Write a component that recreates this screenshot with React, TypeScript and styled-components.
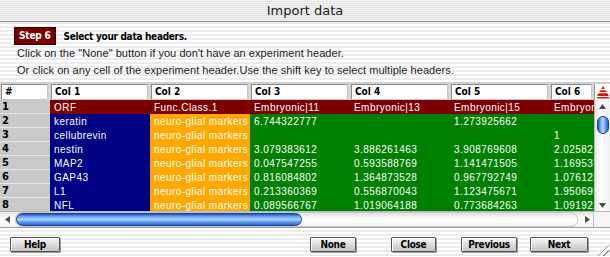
import React from 'react';
import styled, { createGlobalStyle } from 'styled-components';

const GlobalStyle = createGlobalStyle`
  html, body {
    margin: 0;
    padding: 0;
    background: #ffffff;
  }
`;

const uiFont = `"Liberation Sans", Arial, sans-serif`;
const boldFont = `"DejaVu Sans", "Liberation Sans", sans-serif`;

const pinstripe = `repeating-linear-gradient(to bottom, #ffffff 0px, #ffffff 2px, #ececec 2px, #ececec 4px)`;

const Window = styled.div`
  width: 610px;
  height: 257px;
  display: flex;
  flex-direction: column;
  background: ${pinstripe};
  overflow: hidden;
  position: relative;
  font-family: ${uiFont};
`;

const TitleBar = styled.div`
  height: 21px;
  border-bottom: 1px solid #8c8c8c;
  display: flex;
  align-items: center;
  justify-content: center;
  font-family: ${boldFont};
  font-size: 13px;
  color: #1a1a1a;
  background: repeating-linear-gradient(to bottom, #f4f4f4 0px, #f4f4f4 1px, #e2e2e2 1px, #e2e2e2 2px);
`;

const Instructions = styled.div`
  padding: 5px 0 0 14px;
  height: 52px;
`;

const StepRow = styled.div`
  display: flex;
  align-items: center;
  gap: 8px;
  height: 18px;
`;

const StepBadge = styled.div`
  background: #7a0000;
  border: 1px solid #2a0000;
  color: #ffffff;
  font-family: ${boldFont};
  font-weight: bold;
  font-size: 10px;
  font-stretch: condensed;
  padding: 0 4px;
  height: 16px;
  line-height: 16px;
  letter-spacing: -0.2px;
`;

const StepTitle = styled.div`
  font-family: ${boldFont};
  font-weight: bold;
  font-size: 10px;
  font-stretch: condensed;
  letter-spacing: -0.3px;
  color: #000;
`;

const Hint = styled.div`
  font-size: 11px;
  height: 17px;
  line-height: 17px;
  padding-left: 3px;
  color: #1a1a1a;
  letter-spacing: 0.05px;
`;

const TableFrame = styled.div`
  margin-top: 3px;
  border-top: 2px solid #cfcfcf;
  display: flex;
  flex-direction: column;
`;

const columns = `50px repeat(5, 100px) 44px`;

const HeaderRow = styled.div`
  display: grid;
  grid-template-columns: ${columns} 16px;
  height: 16px;
  background: #d4d4d4;
`;

const HeaderCell = styled.div`
  margin: 0 2px 0 1px;
  background: #ffffff;
  border: 1px solid #8a8a8a;
  border-right-color: #c8c8c8;
  border-bottom-color: #c8c8c8;
  font-family: ${boldFont};
  font-weight: bold;
  font-size: 10px;
  font-stretch: condensed;
  line-height: 14px;
  padding-left: 3px;
  white-space: nowrap;
  overflow: hidden;
`;

const SortCell = styled.div`
  background: #ffffff;
  border-left: 1px solid #9a9a9a;
  display: flex;
  align-items: center;
  justify-content: center;
`;

const Body = styled.div`
  display: flex;
  height: 111px;
`;

const Grid = styled.div`
  width: 594px;
  overflow: hidden;
  display: grid;
  grid-template-columns: ${columns};
  grid-auto-rows: 14px;
  align-content: start;
`;

const RowNum = styled.div`
  background: #c9c9c9;
  border-bottom: 1px solid #e6e6e6;
  box-sizing: border-box;
  font-family: ${boldFont};
  font-weight: bold;
  font-size: 10px;
  line-height: 14px;
  padding-left: 2px;
  color: #000;
`;

const Cell = styled.div<{ $bg: string }>`
  background: ${p => p.$bg};
  color: #ffffff;
  font-size: 10px;
  line-height: 15px;
  padding-left: 4px;
  white-space: nowrap;
  overflow: hidden;
  letter-spacing: 0.45px;
`;

const VScroll = styled.div`
  width: 16px;
  background: linear-gradient(to right, #e8e8e8, #ffffff 40%, #f0f0f0);
  border-left: 1px solid #b8b8b8;
  box-sizing: border-box;
  display: flex;
  flex-direction: column;
  align-items: center;
`;

const ArrowBox = styled.div<{ $w: number; $h: number }>`
  width: ${p => p.$w}px;
  height: ${p => p.$h}px;
  flex: none;
  display: flex;
  align-items: center;
  justify-content: center;
`;

const VTrack = styled.div`
  flex: 1;
  width: 100%;
  display: flex;
  flex-direction: column;
  align-items: center;
  padding-top: 4px;
`;

const aqua = `linear-gradient(to bottom, #1b56c8 0%, #6ea6f5 25%, #a9d0ff 50%, #5b97ec 75%, #2a66d8 100%)`;

const VThumb = styled.div`
  width: 12px;
  height: 18px;
  border-radius: 6px;
  background: linear-gradient(to right, #1d55c4 0%, #6fa6f4 25%, #b8dbff 50%, #5d98ea 75%, #2460d2 100%);
  border: 1px solid #1a3f8c;
  box-sizing: border-box;
`;

const HScrollRow = styled.div`
  display: flex;
  height: 15px;
  border-top: 1px solid #b8b8b8;
`;

const HScroll = styled.div`
  width: 594px;
  display: flex;
  align-items: center;
  background: linear-gradient(to bottom, #e4e4e4, #ffffff 45%, #efefef);
`;

const HTrack = styled.div`
  flex: 1;
  height: 13px;
  display: flex;
  align-items: center;
  border-radius: 7px;
  border: 1px solid #c8c8c8;
  margin-right: 3px;
  background: linear-gradient(to bottom, #e0e0e0, #ffffff 50%, #f2f2f2);
`;

const HThumb = styled.div`
  width: 286px;
  height: 13px;
  border-radius: 7px;
  box-sizing: border-box;
  border: 1px solid #1a3f8c;
  background: ${aqua};
`;

const Corner = styled.div`
  width: 16px;
  border-left: 1px solid #b8b8b8;
  background: #f4f4f4;
`;

const Footer = styled.div`
  flex: 1;
  border-top: 1px solid #a0a0a0;
  display: flex;
  align-items: flex-start;
  padding: 9px 0 0 10px;
  position: relative;
`;

const Button = styled.div<{ $w: number }>`
  width: ${p => p.$w}px;
  height: 15px;
  box-sizing: border-box;
  border: 1px solid #555;
  border-radius: 1px;
  background: linear-gradient(to bottom, #fafafa 0%, #dcdcdc 50%, #c4c4c4 100%);
  box-shadow: inset 1px 1px 0 #ffffff, 1px 1px 0 #9a9a9a;
  display: flex;
  align-items: center;
  justify-content: center;
  font-family: ${boldFont};
  font-weight: bold;
  font-size: 10px;
  font-stretch: condensed;
  letter-spacing: -0.3px;
  color: #000;
`;

const Spacer = styled.div<{ $w: number }>`
  width: ${p => p.$w}px;
  flex: none;
`;

const Grip = styled.div`
  position: absolute;
  right: 1px;
  bottom: 1px;
  width: 13px;
  height: 13px;
  background: repeating-linear-gradient(135deg, transparent 0px, transparent 2px, #8a8a8a 2px, #8a8a8a 3px, #ffffff 3px, #ffffff 4px);
  clip-path: polygon(100% 0, 100% 100%, 0 100%);
`;

const RED = '#7d0000';
const BLUE = '#000082';
const ORANGE = '#ffa800';
const GREEN = '#008000';

const rows: string[][] = [
  ['ORF', 'Func.Class.1', 'Embryonic|11', 'Embryonic|13', 'Embryonic|15', 'Embryonic|17'],
  ['keratin', 'neuro-glial markers', '6.744322777', '', '1.273925662', ''],
  ['cellubrevin', 'neuro-glial markers', '', '', '', '1'],
  ['nestin', 'neuro-glial markers', '3.079383612', '3.886261463', '3.908769608', '2.025821547'],
  ['MAP2', 'neuro-glial markers', '0.047547255', '0.593588769', '1.141471505', '1.169537212'],
  ['GAP43', 'neuro-glial markers', '0.816084802', '1.364873528', '0.967792749', '1.076125339'],
  ['L1', 'neuro-glial markers', '0.213360369', '0.556870043', '1.123475671', '1.950695212'],
  ['NFL', 'neuro-glial markers', '0.089566767', '1.019064188', '0.773684263', '1.091922874'],
];

function cellColor(row: number, col: number) {
  if (row === 0) return RED;
  if (col === 0) return BLUE;
  if (col === 1) return ORANGE;
  return GREEN;
}

function SortIcon() {
  return (
    <svg width="14" height="14" viewBox="0 0 14 14">
      <polygon points="7,1 13,11 1,11" fill="#e01010" />
      <rect x="0" y="4" width="14" height="1.2" fill="#ffffff" />
      <rect x="0" y="7" width="14" height="1.2" fill="#ffffff" />
      <rect x="1" y="12" width="12" height="1.5" fill="#e01010" />
    </svg>
  );
}

type Dir = 'up' | 'down' | 'left' | 'right';
const arrowPoints: Record<Dir, string> = {
  up: '0,6 3.5,1 7,6',
  down: '0,1 3.5,6 7,1',
  left: '6,0 1,3.5 6,7',
  right: '1,0 6,3.5 1,7',
};

function ScrollArrow({ dir }: { dir: Dir }) {
  return (
    <svg width="7" height="7" viewBox="0 0 7 7">
      <polygon points={arrowPoints[dir]} fill="#4a4a4a" />
    </svg>
  );
}

export default function App() {
  return (
    <>
      <GlobalStyle />
      <Window>
        <TitleBar>Import data</TitleBar>
        <Instructions>
          <StepRow>
            <StepBadge>Step 6</StepBadge>
            <StepTitle>Select your data headers.</StepTitle>
          </StepRow>
          <Hint>Click on the "None" button if you don't have an experiment header.</Hint>
          <Hint>Or click on any cell of the experiment header.Use the shift key to select multiple headers.</Hint>
        </Instructions>

        <TableFrame>
          <HeaderRow>
            <HeaderCell>#</HeaderCell>
            {[1, 2, 3, 4, 5, 6].map(n => (
              <HeaderCell key={n}>Col {n}</HeaderCell>
            ))}
            <SortCell>
              <SortIcon />
            </SortCell>
          </HeaderRow>

          <Body>
            <Grid>
              {rows.map((row, r) => (
                <React.Fragment key={r}>
                  <RowNum>{r + 1}</RowNum>
                  {row.map((text, c) => (
                    <Cell key={c} $bg={cellColor(r, c)}>{text}</Cell>
                  ))}
                </React.Fragment>
              ))}
            </Grid>
            <VScroll>
              <ArrowBox $w={15} $h={12}><ScrollArrow dir="up" /></ArrowBox>
              <VTrack>
                <VThumb />
              </VTrack>
              <ArrowBox $w={15} $h={12}><ScrollArrow dir="down" /></ArrowBox>
            </VScroll>
          </Body>

          <HScrollRow>
            <HScroll>
              <ArrowBox $w={15} $h={13}><ScrollArrow dir="left" /></ArrowBox>
              <HTrack>
                <HThumb />
              </HTrack>
              <ArrowBox $w={12} $h={13}><ScrollArrow dir="right" /></ArrowBox>
            </HScroll>
            <Corner />
          </HScrollRow>
        </TableFrame>

        <Footer>
          <Button $w={50}>Help</Button>
          <Spacer $w={250} />
          <Button $w={46}>None</Button>
          <Spacer $w={35} />
          <Button $w={45}>Close</Button>
          <Spacer $w={25} />
          <Button $w={56}>Previous</Button>
          <Spacer $w={13} />
          <Button $w={58}>Next</Button>
          <Grip />
        </Footer>
      </Window>
    </>
  );
}
